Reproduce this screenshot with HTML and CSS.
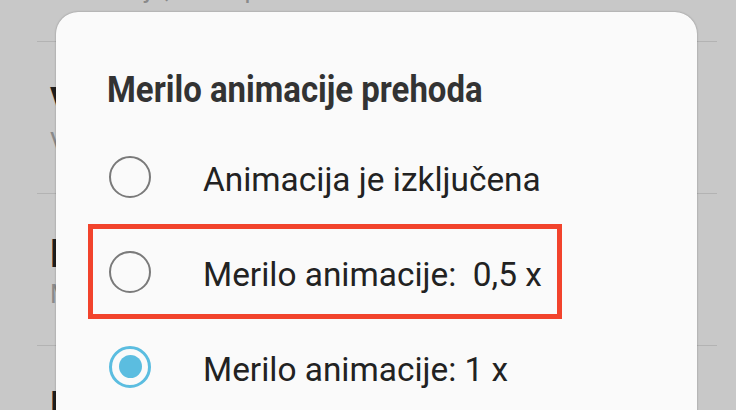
FILE: index.html
```html
<!DOCTYPE html>
<html>
<head>
  <meta charset="utf-8">
  <meta name="viewport" content="width=device-width">
  <title>Merilo animacije prehoda</title>
  <link rel="stylesheet" href="styles.css">
</head>
<body>
  <div class="screen">
    <ul class="settings">
      <li class="item item-first">
        <span class="sub">Animacija, ko se prikaže okno</span>
      </li>
      <li class="item">
        <span class="name">Vsili upodabljanje GPU</span>
        <span class="sub">Vedno uporabi GPU za risanje</span>
      </li>
      <li class="item">
        <span class="name">Merilo animacije okna</span>
        <span class="sub">Merilo animacije 1 x</span>
      </li>
      <li class="item">
        <span class="name">Merilo trajanja animacije</span>
      </li>
    </ul>

    <div class="dialog">
      <h2 class="dialog-title"><span class="squeeze">Merilo animacije prehoda</span></h2>
      <div class="option">
        <span class="radio"></span>
        <span class="label">Animacija je izključena</span>
      </div>
      <div class="option">
        <span class="mark"></span>
        <span class="radio"></span>
        <span class="label">Merilo animacije:&nbsp; 0,5 x</span>
      </div>
      <div class="option">
        <span class="radio checked"></span>
        <span class="label">Merilo animacije: 1 x</span>
      </div>
    </div>
  </div>
</body>
</html>
```

FILE: styles.css
```css
* {
  box-sizing: border-box;
}
body {
  margin: 0;
  background: #c8c8c8;
  font-family: Roboto, "Noto Sans", sans-serif;
}
.screen {
  position: relative;
  width: 736px;
  height: 410px;
  overflow: hidden;
}

/* list behind the dialog */
.settings {
  list-style: none;
  margin: -29px 0 0 0;
  padding: 0;
}
.item {
  margin: 0 19px 0 37px;
  padding: 38px 0 0 13px;
  height: 152px;
  border-bottom: 1px solid #b3b3b3;
  white-space: nowrap;
}
.item-first {
  height: 71px;
  padding-top: 0;
}
.name {
  display: block;
  font-size: 38px;
  line-height: 44px;
  font-weight: 700;
  color: #1e1e1e;
}
.sub {
  display: block;
  font-size: 26px;
  line-height: 36px;
  color: #8a8a8a;
}

/* dialog */
.dialog {
  position: absolute;
  left: 56px;
  top: 12px;
  width: 641px;
  height: 430px;
  background: #fafafa;
  border-radius: 22px 22px 0 0;
  box-shadow: 0 0 2px rgba(0, 0, 0, 0.35);
  padding-top: 60px;
}
.dialog-title {
  margin: 0 0 21px 51px;
  font-size: 36px;
  line-height: 36px;
  font-weight: 700;
  color: #333;
}
.squeeze {
  display: inline-block;
  transform: scaleX(0.915);
  transform-origin: left center;
}
.option {
  position: relative;
  display: flex;
  align-items: center;
  height: 95px;
  padding-left: 53px;
}
.radio {
  flex: none;
  width: 42px;
  height: 42px;
  border: 2.5px solid #7a7a7a;
  border-radius: 50%;
}
.radio.checked {
  border: 3px solid #5bbde0;
  display: flex;
  align-items: center;
  justify-content: center;
}
.radio.checked::after {
  content: "";
  width: 23px;
  height: 23px;
  border-radius: 50%;
  background: #5bbde0;
}
.label {
  margin-left: 52px;
  padding-top: 6px;
  font-size: 33.4px;
  line-height: 40px;
  color: #222;
  white-space: nowrap;
}
.mark {
  position: absolute;
  left: 32px;
  top: 0;
  width: 474px;
  height: 95px;
  border: 5px solid #f2432c;
}
```
